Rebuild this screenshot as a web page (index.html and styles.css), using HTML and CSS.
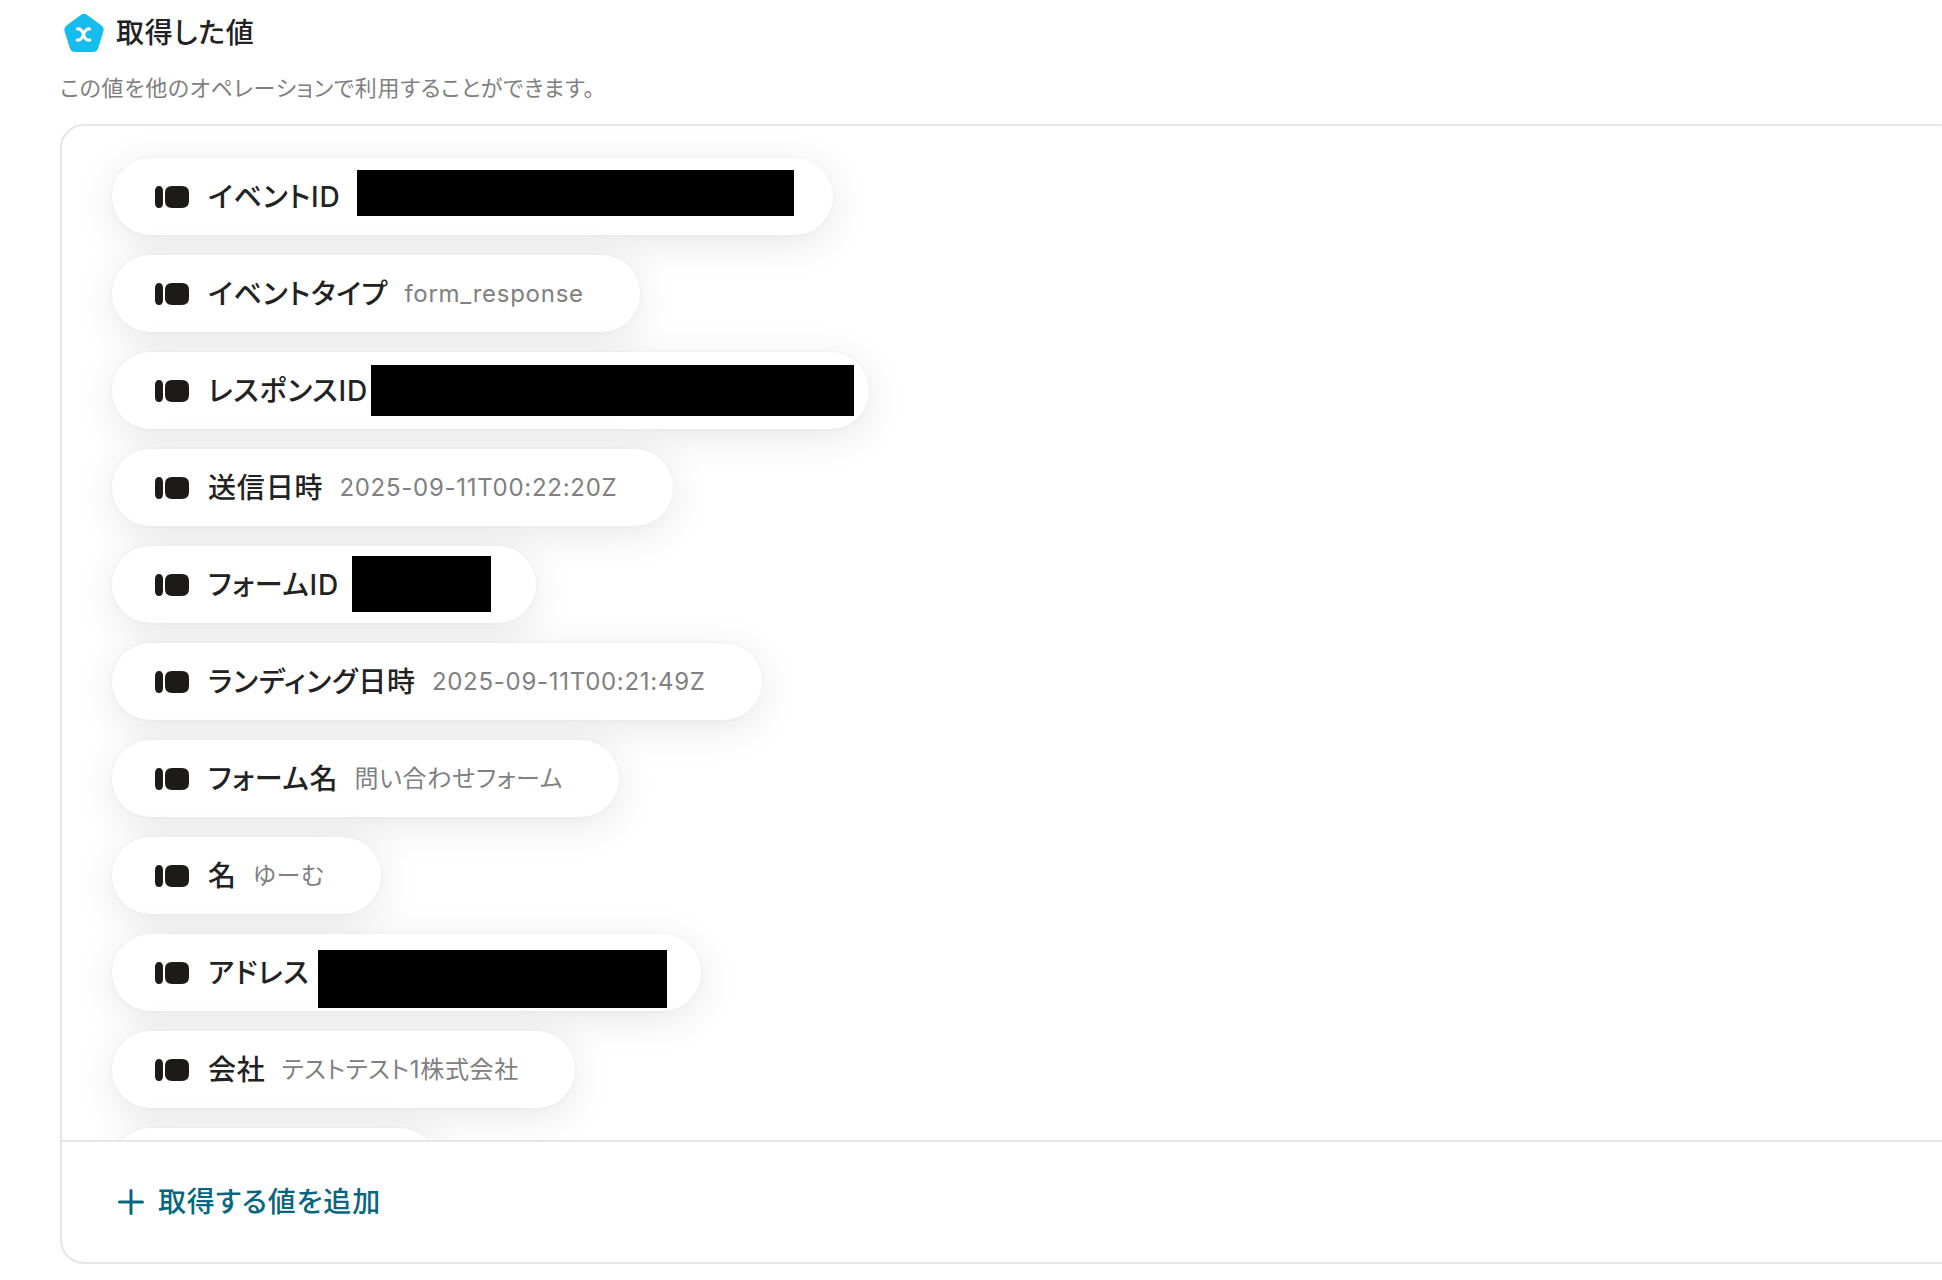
FILE: index.html
```html
<!DOCTYPE html>
<html lang="ja">
<head>
  <meta charset="UTF-8" />
  <meta name="viewport" content="width=device-width, initial-scale=1.0"/>
  <title>取得した値</title>
  <link rel="stylesheet" href="styles.css">
</head>
<body>

  <!-- shared icon for every value -->
  <svg class="defs" width="0" height="0" aria-hidden="true">
    <symbol id="valueIcon" viewBox="0 0 34 22">
      <path d="M4 0C6.600 0 8 2 8 5V17C8 20 6.600 22 4 22S0 20 0 17V5C0 2 1.400 0 4 0Z"/>
      <path d="M17 0H27Q34 0 34 7V15Q34 22 27 22H17Q10 22 10 15V7Q10 0 17 0Z"/>
    </symbol>
  </svg>

  <div class="section-head">
    <svg class="section-icon" viewBox="0 0 40 40" aria-hidden="true">
      <path d="M16.500 2.200Q20-.6 23.500 2.200L37.500 12.600Q40.500 14.800 39.400 18.200L34.400 34.500Q33 39 28.800 39H11.200Q7 39 5.600 34.500L.6 18.200Q-.5 14.800 2.500 12.600Z" fill="#16bcee"/>
      <path d="M13.500 16C17 15.200 18.300 17.500 19.500 21.500S22.500 27.800 25.800 27M25.500 16C22.500 15.200 20.800 18 19.500 21.500S16.500 27.800 13.200 27" fill="none" stroke="#fff" stroke-width="3" stroke-linecap="round"/>
    </svg>
    <h2>取得した値</h2>
  </div>
  <p class="description">この値を他のオペレーションで利用することができます。</p>

  <div class="panel">
    <ul class="value-list">
      <li class="value-item">
        <svg class="value-icon"><use href="#valueIcon"/></svg>
        <span class="label">イベントID</span>
        <span class="value masked event-id"><span class="mask"></span></span>
      </li>
      <li class="value-item">
        <svg class="value-icon"><use href="#valueIcon"/></svg>
        <span class="label">イベントタイプ</span>
        <span class="value">form_response</span>
      </li>
      <li class="value-item">
        <svg class="value-icon"><use href="#valueIcon"/></svg>
        <span class="label">レスポンスID</span>
        <span class="value masked response-id"><span class="mask"></span></span>
      </li>
      <li class="value-item">
        <svg class="value-icon"><use href="#valueIcon"/></svg>
        <span class="label">送信日時</span>
        <span class="value">2025-09-11T00:22:20Z</span>
      </li>
      <li class="value-item">
        <svg class="value-icon"><use href="#valueIcon"/></svg>
        <span class="label">フォームID</span>
        <span class="value masked form-id"><span class="mask"></span></span>
      </li>
      <li class="value-item">
        <svg class="value-icon"><use href="#valueIcon"/></svg>
        <span class="label">ランディング日時</span>
        <span class="value">2025-09-11T00:21:49Z</span>
      </li>
      <li class="value-item">
        <svg class="value-icon"><use href="#valueIcon"/></svg>
        <span class="label">フォーム名</span>
        <span class="value">問い合わせフォーム</span>
      </li>
      <li class="value-item">
        <svg class="value-icon"><use href="#valueIcon"/></svg>
        <span class="label">名</span>
        <span class="value">ゆーむ</span>
      </li>
      <li class="value-item">
        <svg class="value-icon"><use href="#valueIcon"/></svg>
        <span class="label">アドレス</span>
        <span class="value masked address"><span class="mask"></span></span>
      </li>
      <li class="value-item">
        <svg class="value-icon"><use href="#valueIcon"/></svg>
        <span class="label">会社</span>
        <span class="value">テストテスト1株式会社</span>
      </li>
      <li class="value-item empty"></li>
    </ul>

    <div class="panel-footer">
      <button class="add-btn" type="button">
        <svg class="plus" viewBox="0 0 26 26" aria-hidden="true">
          <path d="M13 1.500V24.500M1.500 13H24.500"/>
        </svg>
        取得する値を追加
      </button>
    </div>
  </div>

</body>
</html>
```

FILE: styles.css
```css
* {
  box-sizing: border-box;
}

body {
  display: flex;
  flex-direction: column;
  height: 100vh;
  margin: 0;
  padding: 12px 0 16px 60px;
  overflow: hidden;
  background: #fff;
  color: #222;
  font-family: Inter, "Noto Sans CJK JP", sans-serif;
  font-feature-settings: "palt";
}

h2,
.description,
.label,
.value,
.add-btn {
  letter-spacing: 0.03em;
}

.defs {
  position: absolute;
}

.section-head {
  display: flex;
  align-items: center;
  gap: 12px;
  height: 42px;
  padding-left: 4px;
}

.section-icon {
  width: 40px;
  height: 40px;
}

h2 {
  margin: 0;
  font-size: 28px;
  line-height: 40px;
  font-weight: 500;
}

.description {
  margin: 18px 0 20px;
  color: #808080;
  font-size: 22px;
  line-height: 32px;
}

/* the panel runs on past the right side of the window */
.panel {
  display: flex;
  flex: 1;
  flex-direction: column;
  min-height: 0;
  margin-right: -20px;
  border: 2px solid #e5e5e5;
  border-radius: 24px;
  overflow: hidden;
}

.value-list {
  display: flex;
  flex: 1;
  flex-direction: column;
  align-items: flex-start;
  gap: 20px;
  min-height: 0;
  margin: 0;
  padding: 32px 50px 0;
  overflow: hidden;
  list-style: none;
}

.value-item {
  display: flex;
  flex-shrink: 0;
  align-items: center;
  height: 77px;
  padding: 0 56px 0 43px;
  border-radius: 40px;
  background: #fff;
  box-shadow: 0 0 0 2px rgba(0, 0, 0, 0.01), 0 8px 40px rgba(0, 0, 0, 0.1);
}

.value-item.empty {
  width: 326px;
}

.value-icon {
  width: 34px;
  height: 22px;
  margin-right: 19px;
  fill: #1c1b19;
}

.label {
  margin-right: 16px;
  font-size: 28px;
  line-height: 40px;
  font-weight: 500;
}

.value {
  color: #808080;
  font-size: 24px;
  line-height: 40px;
}

/* private values are blacked out */
.masked {
  position: relative;
  height: 40px;
}

.mask {
  position: absolute;
  background: #000;
}

.event-id {
  width: 421px;
}

.event-id .mask {
  inset: -7px -17px 1px 1px;
}

.response-id {
  width: 429px;
}

.response-id .mask {
  inset: -6px -41px -5px -13px;
}

.form-id {
  width: 125px;
}

.form-id .mask {
  inset: -9px -11px -7px -3px;
}

.address {
  width: 320px;
}

.address .mask {
  inset: -3px -22px -15px -7px;
}

.panel-footer {
  display: flex;
  align-items: center;
  height: 122px;
  padding: 0 56px;
  border-top: 2px solid #e5e5e5;
}

.add-btn {
  display: flex;
  align-items: center;
  gap: 14px;
  padding: 0;
  border: none;
  background: none;
  color: #08677f;
  font: inherit;
  font-size: 28px;
  line-height: 40px;
  font-weight: 500;
  font-feature-settings: inherit;
  cursor: pointer;
}

.plus {
  width: 26px;
  height: 26px;
  fill: none;
  stroke: #08677f;
  stroke-width: 3;
  stroke-linecap: round;
}
```
